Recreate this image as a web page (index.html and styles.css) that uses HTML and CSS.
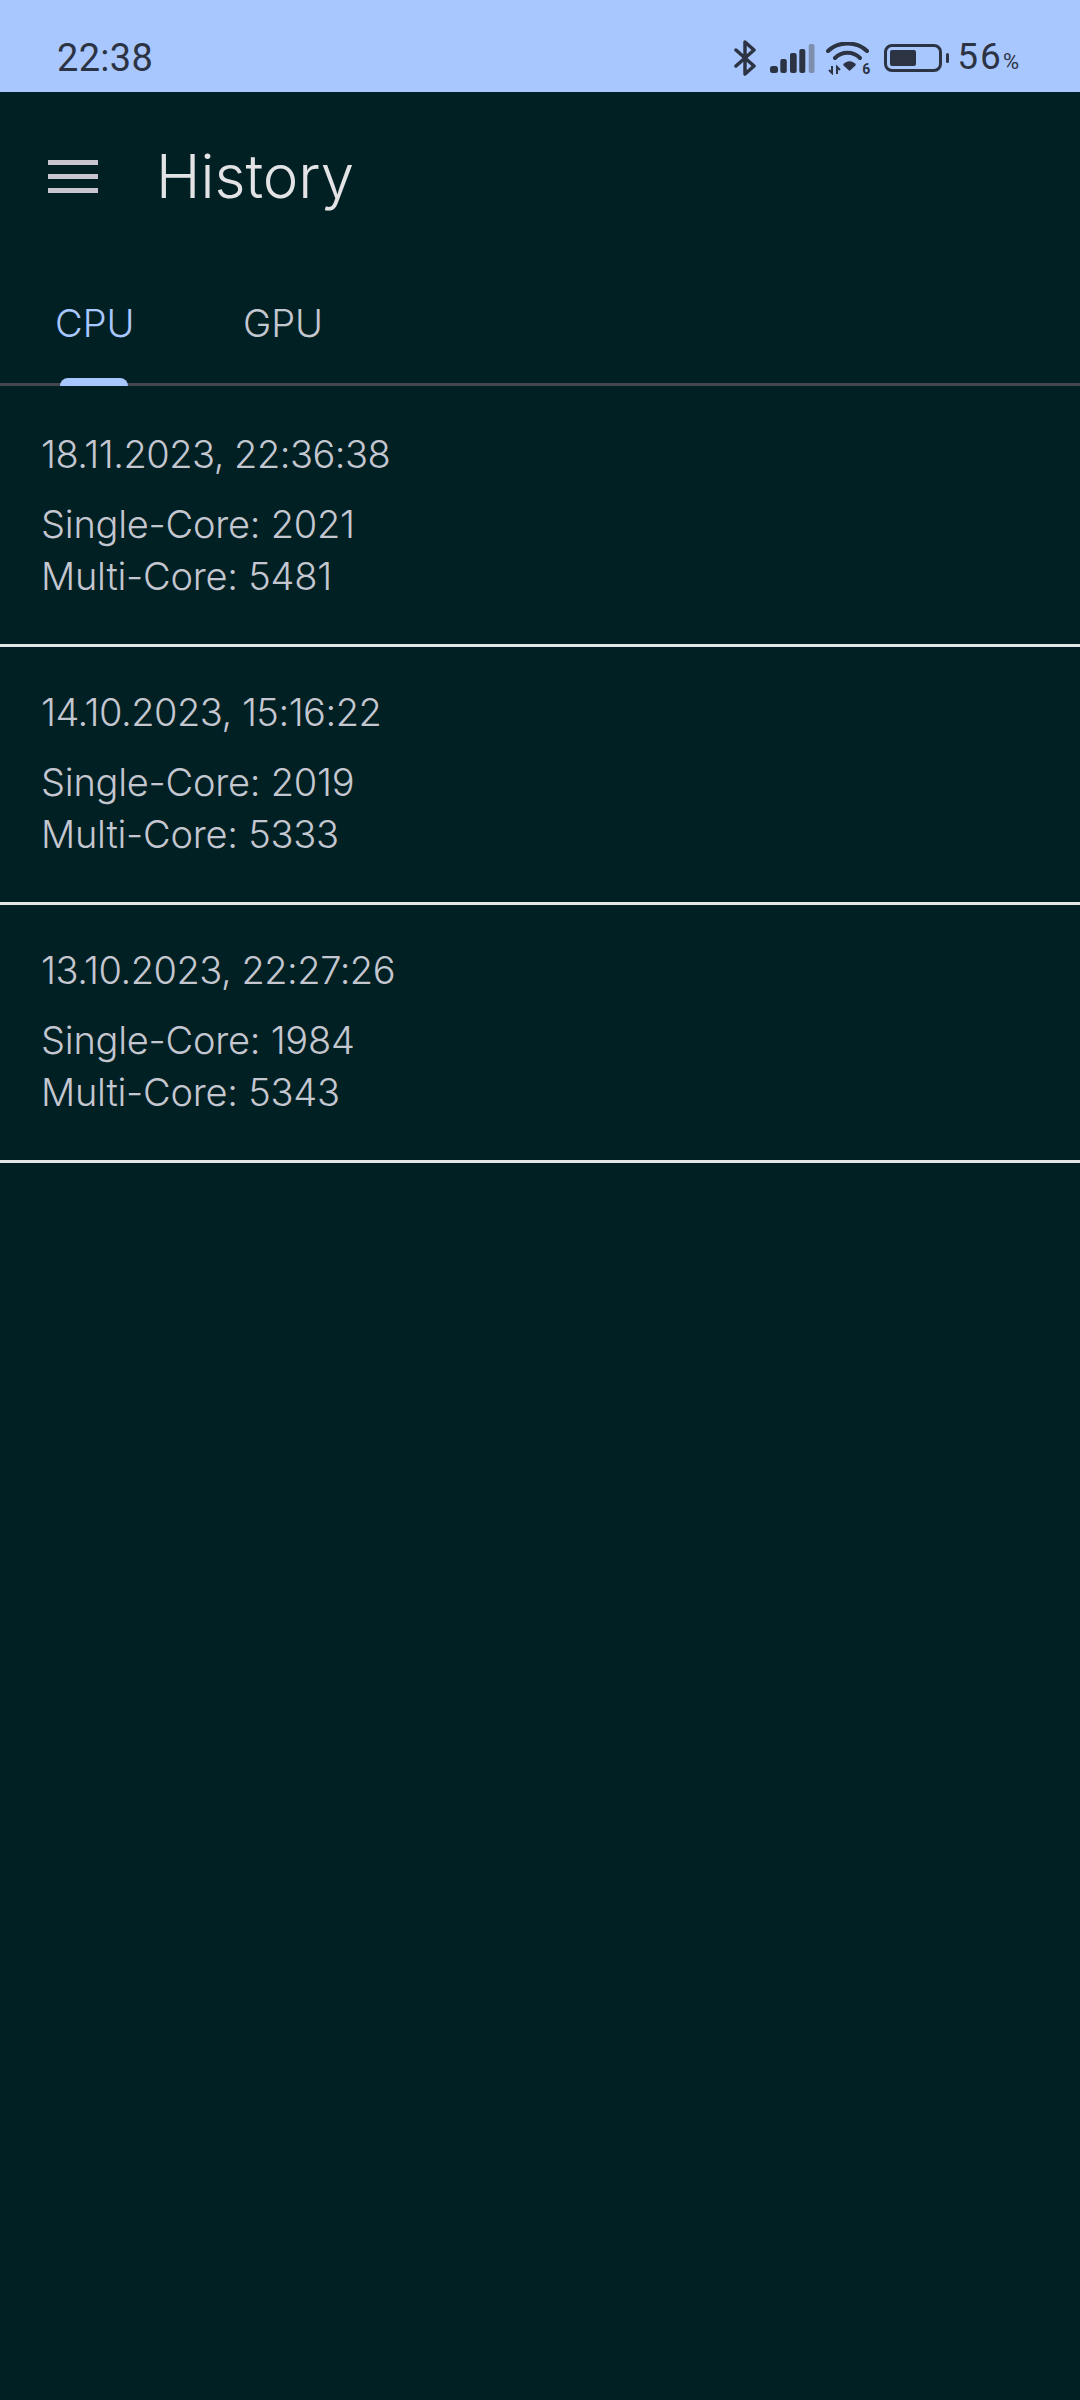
FILE: index.html
```html
<!DOCTYPE html>
<html lang="en">
<head>
<meta charset="utf-8">
<title>History</title>
<link rel="stylesheet" href="styles.css">
</head>
<body>
<div class="status">
  <span class="time">22:38</span>
  <div class="status-icons">
    <svg class="ic-bt" width="22" height="36" viewBox="0 0 22 36"><path d="M2 10 L20 26 L11 34 V2 L20 10 L2 26" fill="none" stroke="#2c3444" stroke-width="3.5" stroke-linejoin="round" stroke-linecap="round"/></svg>
    <svg class="ic-sig" width="45" height="29" viewBox="0 0 45 29"><rect x="0" y="22" width="8" height="7" rx="2.5" fill="#2c3444"/><rect x="10.3" y="15" width="6.5" height="14" rx="2" fill="#2c3444"/><rect x="20" y="9" width="6.7" height="20" rx="2" fill="#2c3444"/><rect x="29.3" y="5" width="6" height="24" rx="2" fill="#2c3444"/><rect x="38.7" y="0" width="5.8" height="29" rx="2" fill="#7e8eae"/></svg>
    <span class="wifi">
      <svg width="44" height="33" viewBox="0 0 44 33"><path d="M2 9 C12 -1 31 -1 41 9 M9 16 C16 9 27 9 34 16" fill="none" stroke="#2c3444" stroke-width="4" stroke-linecap="round"/><path d="M17 23 C20 18 27 18 30 23 L23.500 29Z" fill="#2c3444"/><path d="M6 24 V31 L3 28 M11 32 V25 L14 28" stroke="#2c3444" stroke-width="2" fill="none"/></svg>
      <span class="wifi-six">6</span>
    </span>
    <div class="battery"><div class="battery-fill"></div></div>
    <span class="battery-tip"></span>
    <span class="pct">56<small>%</small></span>
  </div>
</div>
<header class="appbar">
  <div class="menu"><i></i><i></i><i></i></div>
  <h1>History</h1>
</header>
<nav class="tabs">
  <div class="tab active">CPU<span class="ind"></span></div>
  <div class="tab">GPU</div>
</nav>
<main>
  <section class="row">
    <p class="date">18.11.2023, 22:36:38</p>
    <p class="score">Single-Core: 2021</p>
    <p class="score">Multi-Core: 5481</p>
  </section>
  <section class="row">
    <p class="date">14.10.2023, 15:16:22</p>
    <p class="score">Single-Core: 2019</p>
    <p class="score">Multi-Core: 5333</p>
  </section>
  <section class="row">
    <p class="date">13.10.2023, 22:27:26</p>
    <p class="score">Single-Core: 1984</p>
    <p class="score">Multi-Core: 5343</p>
  </section>
</main>
</body>
</html>
```
FILE: styles.css
```css
* { box-sizing: border-box; }
html, body { margin: 0; height: 2400px; overflow: hidden; }
body { background: #012023; font-family: Inter, "Noto Sans", sans-serif; color: #c4c6d0; }
.status { height: 92px; background: #a9c7ff; display: flex; align-items: center; justify-content: space-between; padding: 24px 61px 0 57px; color: #2c3444; }
.time { font-family: Roboto, sans-serif; font-size: 38px; font-weight: 400; letter-spacing: 0.3px; line-height: 44px; }
.status-icons { display: flex; align-items: center; }
.ic-bt { margin-right: 14px; }
.ic-sig { margin-right: 11px; }
.wifi { position: relative; display: flex; margin-right: 14px; }
.wifi-six { position: absolute; right: 0; bottom: -1px; font-family: Roboto, sans-serif; font-size: 14px; line-height: 14px; font-weight: 700; color: #2c3444; }
.battery { width: 58px; height: 28px; border: 3px solid #2c3444; border-radius: 8px; padding: 3px; }
.battery-fill { width: 26px; height: 100%; background: #2c3444; border-radius: 2px; }
.battery-tip { width: 3px; height: 10px; background: #2c3444; margin: 0 8px 0 4px; border-radius: 2px; }
.pct { font-family: Roboto, sans-serif; font-size: 37px; letter-spacing: 2px; line-height: 44px; padding-top: 3px; display: flex; align-items: baseline; }
.pct small { font-size: 22px; letter-spacing: 0; }
.appbar { height: 168px; display: flex; align-items: center; padding-left: 48px; }
.menu { width: 50px; display: flex; flex-direction: column; gap: 9px; margin-right: 58px; }
.menu i { display: block; height: 5px; background: #c8c4d0; }
h1 { margin: 0; font-size: 60px; font-weight: 300; color: #e3e3e6; letter-spacing: 0; }
.tabs { height: 126px; border-bottom: 3px solid #44474f; display: flex; align-items: stretch; }
.tab { position: relative; font-size: 38px; font-weight: 300; color: #c4c6d0; line-height: 126px; }
.tab.active { color: #a9c7ff; width: 187px; padding-left: 55px; }
.tab:nth-child(2) { padding-left: 56px; }
.ind { position: absolute; left: 60px; bottom: -3px; width: 68px; height: 8px; background: #a9c7ff; border-radius: 8px 8px 0 0; }
.row { height: 258px; border-bottom: 3px solid #e3e6e6; padding: 0 0 0 41px; }
.row:first-child { height: 261px; }
.row p { margin: 0; font-weight: 300; font-size: 38px; }
.row .date { letter-spacing: -0.5px; line-height: 46px; padding-top: 45px; height: 112px; }
.row:nth-child(n+2) .date { padding-top: 42px; height: 109px; }
.row .score { letter-spacing: -0.25px; line-height: 52px; }
```
